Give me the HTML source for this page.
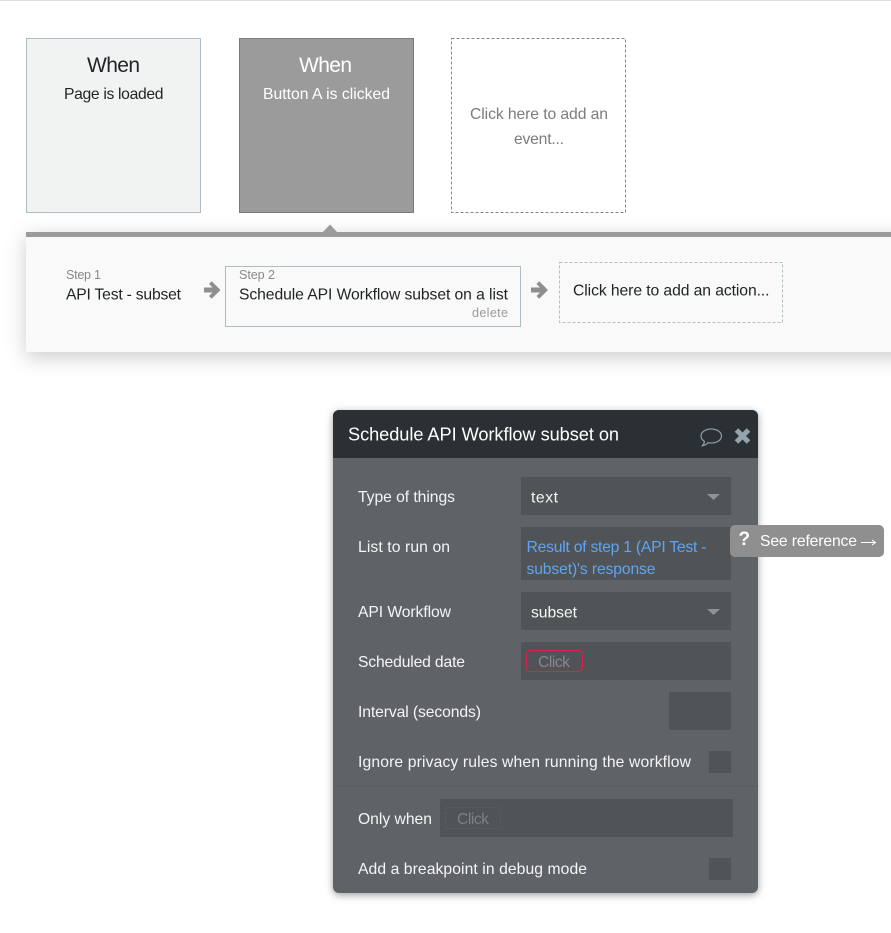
<!DOCTYPE html>
<html>
<head>
<meta charset="utf-8">
<style>
html,body{margin:0;padding:0;background:#fff;width:891px;height:933px;overflow:hidden}
svg{display:block;position:absolute;left:0;top:0}
text{font-family:"Liberation Sans",sans-serif;font-size:15.7px;fill:#fff}
.d{fill:#1f2326}
.l{fill:#f4f5f5}
.s{font-size:12.6px}
</style>
</head>
<body>
<svg width="891" height="933" viewBox="0 0 891 933" xmlns="http://www.w3.org/2000/svg">
<defs>
<filter id="s1" x="-10%" y="-40%" width="120%" height="180%"><feDropShadow dx="0" dy="5" stdDeviation="10" flood-color="#000" flood-opacity=".2"/></filter>
<filter id="s2" x="-10%" y="-10%" width="120%" height="120%"><feDropShadow dx="0" dy="2" stdDeviation="4" flood-color="#000" flood-opacity=".38"/></filter>
</defs>
<rect width="891" height="933" fill="#fff"/>
<rect width="891" height="1" fill="#e0e0e0"/>

<rect x="26.5" y="38.5" width="174" height="174" fill="#f1f3f3" stroke="#b0bcc2"/>
<text class="d" x="87" y="72" style="font-size:21px" textLength="53">When</text>
<text class="d" x="64" y="99" textLength="99.5">Page is loaded</text>

<rect x="239.5" y="38.5" width="174" height="174" fill="#9b9b9b" stroke="#7a7a7a"/>
<text x="299" y="72" style="font-size:21px" textLength="53">When</text>
<text x="263" y="99" textLength="127">Button A is clicked</text>

<rect x="451.5" y="38.5" width="174" height="174" fill="#fff" stroke="#858585" stroke-dasharray="3 2"/>
<text x="470" y="119" style="fill:#7c7c7c" textLength="138">Click here to add an</text>
<text x="514" y="144" style="fill:#7c7c7c" textLength="50">event...</text>

<rect x="26" y="232" width="900" height="120" fill="#f9f9f9" filter="url(#s1)"/>
<rect x="26" y="232" width="865" height="5" fill="#9b9b9b"/>
<path d="M322 233L330 224.500L338 233Z" fill="#9b9b9b"/>

<text class="s" x="66" y="279" style="fill:#8a8a8a" textLength="35">Step 1</text>
<text class="d" x="66" y="299.500" textLength="115">API Test - subset</text>
<path d="M204 287.500h8.500l-3.500-3.500 2.700-2.700 8.800 8.700-8.800 8.700-2.700-2.700 3.500-3.500h-8.500z" fill="#8e8e8e"/>

<rect x="225.500" y="266.500" width="295" height="60" fill="none" stroke="#b0bcc2"/>
<text class="s" x="239" y="279" style="fill:#8a8a8a" textLength="36">Step 2</text>
<text class="d" x="239" y="299.500" textLength="269">Schedule API Workflow subset on a list</text>
<text class="s" x="472" y="317" style="fill:#9b9b9b" textLength="36">delete</text>
<path d="M531 287.500h9l-3.500-3.500 2.700-2.700 8.800 8.700-8.800 8.700-2.700-2.700 3.500-3.500h-9z" fill="#8e8e8e"/>

<rect x="559.500" y="262.500" width="223" height="60" fill="none" stroke="#b4bec2" stroke-dasharray="3 2"/>
<text class="d" x="573" y="295.500" textLength="196.500">Click here to add an action...</text>

<rect x="333" y="410" width="425" height="483" rx="6" fill="#5f6367" filter="url(#s2)"/>
<path d="M333 458V416a6 6 0 0 1 6-6H752a6 6 0 0 1 6 6V458Z" fill="#2a3033"/>
<text x="348" y="440.500" style="font-size:18.200px" textLength="271">Schedule API Workflow subset on</text>
<path d="M711 429c6 0 10.500 3 10.500 7s-4.500 7-10.500 7c-1 0-2 0-3-.3-1.200 1.300-3 2.800-5.500 3 1-1 1.800-2.500 1.900-4.300-2-1.300-3.400-3.200-3.400-5.400 0-4 4.500-7 10-7z" fill="none" stroke="#8b9aa1" stroke-width="1.300"/>
<path d="M736.500 430l12 12M748.500 430l-12 12" fill="none" stroke="#93a4ad" stroke-width="5"/>

<text class="l" x="358" y="502" textLength="97">Type of things</text>
<rect x="521" y="477" width="210" height="38" fill="#505457"/>
<text class="l" x="531" y="502.500" textLength="27">text</text>
<path d="M707 494h13l-6.500 6z" fill="#8d9397"/>

<text class="l" x="358" y="552" textLength="92">List to run on</text>
<rect x="521" y="527" width="210" height="53" fill="#505457"/>
<text x="526.500" y="552" style="fill:#5ea4f5" textLength="180">Result of step 1 (API Test -</text>
<text x="526.500" y="574" style="fill:#5ea4f5" textLength="129">subset)'s response</text>

<text class="l" x="358" y="617" textLength="93">API Workflow</text>
<rect x="521" y="592" width="210" height="38" fill="#505457"/>
<text class="l" x="531" y="617.500" textLength="46">subset</text>
<path d="M707 609h13l-6.500 6z" fill="#8d9397"/>

<text class="l" x="358" y="667" textLength="107">Scheduled date</text>
<rect x="521" y="642" width="210" height="38" fill="#505457"/>
<rect x="526.500" y="650.500" width="56" height="21" rx="4" fill="none" stroke="#e0204f" stroke-width="1"/>
<text x="538" y="667" style="fill:#84888b" textLength="32">Click</text>

<text class="l" x="358" y="717" textLength="123">Interval (seconds)</text>
<rect x="669" y="692" width="62" height="38" fill="#505457"/>

<text class="l" x="358" y="767" textLength="333">Ignore privacy rules when running the workflow</text>
<rect x="709" y="751" width="22" height="22" fill="#505457"/>

<rect x="333" y="786" width="425" height="1" fill="#585c60"/>

<text class="l" x="358" y="824" textLength="74">Only when</text>
<rect x="440" y="799" width="293" height="38" fill="#505457"/>
<rect x="445.500" y="807.500" width="55" height="21" rx="2" fill="none" stroke="#5a5e62" stroke-dasharray="3 2"/>
<text x="457" y="824" style="fill:#7c8083" textLength="32">Click</text>

<text class="l" x="358" y="874" textLength="229">Add a breakpoint in debug mode</text>
<rect x="709" y="858" width="22" height="22" fill="#505457"/>

<rect x="730" y="525" width="154" height="32" rx="5" fill="#8f8f8f"/>
<text x="738.500" y="545" style="font-size:19px;font-weight:bold" textLength="11">?</text>
<text x="760" y="546" textLength="97">See reference</text>
<path d="M861 542.500h14M872 540l3.500 2.500-3.500 2.500" fill="none" stroke="#fff" stroke-width="1"/>
</svg>
</body>
</html>
